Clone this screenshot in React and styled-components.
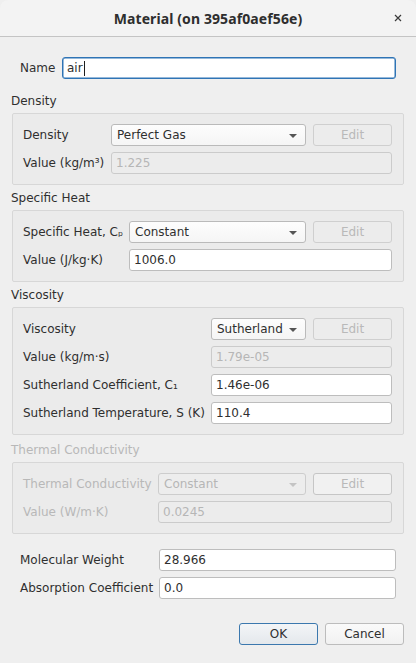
import React from "react";
import styled, { createGlobalStyle } from "styled-components";

const Global = createGlobalStyle`
  html, body { margin: 0; padding: 0; background: #efefef; }
  body { font-family: "DejaVu Sans", "Liberation Sans", sans-serif; font-size: 12px; color: #2f2f2f; }
  * { box-sizing: border-box; }
`;

const Window = styled.div`
  width: 416px;
  height: 663px;
  overflow: hidden;
  background: #efefef;
  display: flex;
  flex-direction: column;
  border-radius: 8px 8px 0 0;
`;

const TitleBar = styled.div`
  height: 37px;
  flex: none;
  display: flex;
  align-items: center;
  justify-content: center;
  position: relative;
  background: #f3f3f3;
  border-bottom: 1px solid #c4c4c4;
  border-radius: 8px 8px 0 0;
`;

const Title = styled.div`
  font-family: "Noto Sans", "Open Sans", sans-serif;
  font-weight: 700;
  font-size: 14px;
  color: #2e2e2e;
  letter-spacing: 0.1px;
`;

const CloseButton = styled.div`
  position: absolute;
  right: 13px;
  top: 13px;
  width: 10px;
  height: 10px;
  display: flex;
  align-items: center;
  justify-content: center;
`;

const Body = styled.div`
  display: flex;
  flex-direction: column;
  padding: 20px 12px 0 11px;
`;

const TopRow = styled.div`
  display: grid;
  grid-template-columns: ${(p) => p.$labelCol}px 1fr;
  align-items: center;
  padding: 0 8px 0 9px;
  margin-bottom: ${(p) => p.$mb || 0}px;
`;

const SectionTitle = styled.div`
  height: 18px;
  line-height: 18px;
  margin-bottom: 3px;
  color: ${(p) => (p.$disabled ? "#b8b8b8" : "#2f2f2f")};
`;

const Section = styled.div`
  display: flex;
  flex-direction: column;
  margin-bottom: ${(p) => p.$mb}px;
`;

const Group = styled.div`
  margin-left: 1px;
  border: 1px solid #d7d7d7;
  border-radius: 2px;
  background: #ebebeb;
  padding: 10px 11px 10px 10px;
  display: grid;
  grid-template-columns: ${(p) => p.$labelCol}px 1fr 79px;
  column-gap: 7px;
  row-gap: 6px;
  align-items: center;
`;

const Label = styled.div`
  white-space: nowrap;
  color: ${(p) => (p.$disabled ? "#b8b8b8" : "#2f2f2f")};
`;

const Field = styled.div`
  height: 22px;
  display: flex;
  align-items: center;
  padding-left: 4px;
  border-radius: 3px;
  white-space: nowrap;
  grid-column: ${(p) => p.$span || "auto"};
  border: 1px solid ${(p) => (p.$focus ? "#2f74b5" : p.$disabled ? "#cbcbcb" : "#bdbdbd")};
  background: ${(p) => (p.$disabled ? "#ececec" : "#ffffff")};
  color: ${(p) => (p.$disabled ? "#b6b6b6" : "#2f2f2f")};
  box-shadow: ${(p) => (p.$focus ? "inset 0 0 0 0.5px #2f74b5" : "none")};
`;

const Caret = styled.span`
  display: inline-block;
  width: 1px;
  height: 15px;
  background: #1e1e1e;
  margin-left: 1px;
`;

const ComboWrap = styled.div`
  grid-column: 2;
  display: flex;
  justify-content: ${(p) => (p.$narrow ? "flex-start" : "stretch")};
`;

const Combo = styled.div`
  height: 22px;
  width: ${(p) => (p.$width ? `${p.$width}px` : "100%")};
  display: flex;
  align-items: center;
  justify-content: space-between;
  padding: 0 8px 0 5px;
  border-radius: 3px;
  border: 1px solid ${(p) => (p.$disabled ? "#cdcdcd" : "#bababa")};
  background: ${(p) => (p.$disabled ? "#ededed" : "linear-gradient(#fdfdfd, #f5f5f5)")};
  color: ${(p) => (p.$disabled ? "#b6b6b6" : "#2f2f2f")};
`;

const Arrow = styled.span`
  width: 0;
  height: 0;
  border-left: 4px solid transparent;
  border-right: 4px solid transparent;
  border-top: 4px solid ${(p) => (p.$disabled ? "#c4c4c4" : "#555555")};
  margin-top: 1px;
`;

const EditButton = styled.div`
  grid-column: 3;
  height: 22px;
  display: flex;
  align-items: center;
  justify-content: center;
  border-radius: 3px;
  border: 1px solid ${(p) => (p.$soft ? "#c6c6c6" : "#cfcfcf")};
  background: ${(p) => (p.$soft ? "#f1f1f1" : "#ececec")};
  color: #b9b9b9;
`;

const Footer = styled.div`
  display: flex;
  justify-content: flex-end;
  gap: 7px;
  margin-top: 24px;
`;

const Button = styled.div`
  width: 79px;
  height: 22px;
  display: flex;
  align-items: center;
  justify-content: center;
  border-radius: 3px;
  color: #2f2f2f;
  border: 1px solid ${(p) => (p.$default ? "#3b78ae" : "#bcbcbc")};
  background: ${(p) => (p.$default ? "linear-gradient(#f3f5f7, #e4e8ec)" : "linear-gradient(#fafafa, #f1f1f1)")};
`;

function ComboBox({ value, disabled, width }) {
  return (
    <ComboWrap $narrow={!!width}>
      <Combo $disabled={disabled} $width={width}>
        <span>{value}</span>
        <Arrow $disabled={disabled} />
      </Combo>
    </ComboWrap>
  );
}

export default function App() {
  return (
    <>
      <Global />
      <Window>
        <TitleBar>
          <Title>Material (on 395af0aef56e)</Title>
          <CloseButton>
            <svg width="8" height="8" viewBox="0 0 8 8">
              <path d="M1 1 L7 7 M7 1 L1 7" stroke="#3a3a3a" strokeWidth="1.2" />
            </svg>
          </CloseButton>
        </TitleBar>
        <Body>
          <TopRow $labelCol={42} $mb={13}>
            <Label>Name</Label>
            <Field $focus>
              air
              <Caret />
            </Field>
          </TopRow>

          <Section $mb={4}>
            <SectionTitle>Density</SectionTitle>
            <Group $labelCol={81}>
              <Label>Density</Label>
              <ComboBox value="Perfect Gas" />
              <EditButton>Edit</EditButton>
              <Label>Value (kg/m³)</Label>
              <Field $disabled $span="2 / 4">1.225</Field>
            </Group>
          </Section>

          <Section $mb={4}>
            <SectionTitle>Specific Heat</SectionTitle>
            <Group $labelCol={99}>
              <Label>Specific Heat, Cₚ</Label>
              <ComboBox value="Constant" />
              <EditButton>Edit</EditButton>
              <Label>Value (J/kg·K)</Label>
              <Field $span="2 / 4">1006.0</Field>
            </Group>
          </Section>

          <Section $mb={6}>
            <SectionTitle>Viscosity</SectionTitle>
            <Group $labelCol={181}>
              <Label>Viscosity</Label>
              <ComboBox value="Sutherland" />
              <EditButton>Edit</EditButton>
              <Label>Value (kg/m·s)</Label>
              <Field $disabled $span="2 / 4">1.79e-05</Field>
              <Label>Sutherland Coefficient, C₁</Label>
              <Field $span="2 / 4">1.46e-06</Field>
              <Label>Sutherland Temperature, S (K)</Label>
              <Field $span="2 / 4">110.4</Field>
            </Group>
          </Section>

          <Section $mb={15}>
            <SectionTitle $disabled>Thermal Conductivity</SectionTitle>
            <Group $labelCol={128}>
              <Label $disabled>Thermal Conductivity</Label>
              <ComboBox value="Constant" disabled />
              <EditButton $soft>Edit</EditButton>
              <Label $disabled>Value (W/m·K)</Label>
              <Field $disabled $span="2 / 4">0.0245</Field>
            </Group>
          </Section>

          <TopRow $labelCol={139} $mb={6}>
            <Label>Molecular Weight</Label>
            <Field>28.966</Field>
          </TopRow>
          <TopRow $labelCol={139}>
            <Label>Absorption Coefficient</Label>
            <Field>0.0</Field>
          </TopRow>

          <Footer>
            <Button $default>OK</Button>
            <Button>Cancel</Button>
          </Footer>
        </Body>
      </Window>
    </>
  );
}
